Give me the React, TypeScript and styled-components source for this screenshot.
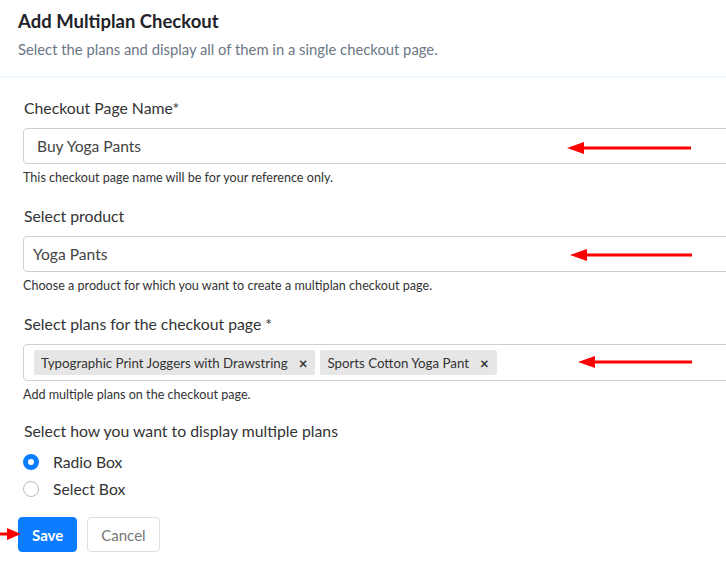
import React from "react";
import styled, { createGlobalStyle } from "styled-components";

const GlobalStyle = createGlobalStyle`
  html, body {
    margin: 0;
    padding: 0;
    background: #fff;
    overflow: hidden;
  }
  body {
    font-family: Lato, "Open Sans", sans-serif;
    color: #333;
  }
`;

const Page = styled.div`
  width: 726px;
  height: 564px;
  overflow: hidden;
  position: relative;
`;

// Header
const Header = styled.div`
  padding: 10px 18px 17px;
  border-bottom: 2px solid #eef6ff;
`;

const Title = styled.h1`
  margin: 0;
  font-size: 18.5px;
  line-height: 22px;
  font-weight: 700;
  color: #1f2329;
`;

const Subtitle = styled.p`
  margin: 7px 0 0;
  font-size: 14.8px;
  line-height: 20px;
  color: #6b7785;
`;

// Form
const Form = styled.div`
  padding: 20px 0 0 23px;
`;

const Field = styled.div<{ $top?: number }>`
  margin-top: ${($) => $.$top ?? 0}px;
  margin-bottom: 20px;

  &:last-child {
    margin-bottom: 0;
  }
`;

const Label = styled.div`
  font-size: 15.8px;
  line-height: 20px;
  color: #333;
  padding-left: 1px;
  margin-bottom: 10px;
`;

const InputWrap = styled.div`
  position: relative;
`;

const Input = styled.div<{ $pad: number }>`
  box-sizing: border-box;
  width: 760px;
  height: 36px;
  border: 1px solid #ccd0d5;
  border-radius: 4px;
  display: flex;
  align-items: center;
  padding: 0 ${($) => $.$pad}px;
  font-size: 15.6px;
  color: #444;
`;

const TagBox = styled(Input)`
  height: 37px;
  gap: 5px;
  padding: 0 10px;
`;

const Tag = styled.span`
  display: inline-flex;
  align-items: center;
  height: 25px;
  padding: 0 8px 0 7px;
  background: #e6e6e6;
  border-radius: 2px;
  font-size: 13.3px;
  color: #333;
  gap: 11px;
`;

const TagX = styled.span`
  font-weight: 700;
  font-size: 15px;
  color: #333;
`;

const Help = styled.div`
  margin-top: 6px;
  font-size: 12.6px;
  line-height: 16px;
  color: #333;
`;

const Options = styled.div`
  display: flex;
  flex-direction: column;
  margin-top: -3px;
`;

const Option = styled.label`
  display: flex;
  align-items: center;
  height: 27px;
  gap: 14px;
  font-size: 15.7px;
  color: #333;
`;

const Radio = styled.span<{ $checked: boolean }>`
  box-sizing: border-box;
  width: 16px;
  height: 16px;
  border-radius: 50%;
  border: ${($) => ($.$checked ? "5px solid #0a7cff" : "1px solid #b8bcc2")};
  background: #fff;
`;

// Footer
const Footer = styled.div`
  display: flex;
  gap: 10px;
  padding: 15px 0 0 18px;
  position: relative;
`;

const Button = styled.button<{ $primary?: boolean }>`
  height: 35px;
  padding: 0 13px;
  border-radius: 4px;
  font-family: Lato, "Open Sans", sans-serif;
  font-size: 15px;
  font-weight: ${($) => ($.$primary ? 700 : 400)};
  border: 1px solid ${($) => ($.$primary ? "#0a7cff" : "#dcdfe3")};
  background: ${($) => ($.$primary ? "#0a7cff" : "#fff")};
  color: ${($) => ($.$primary ? "#fff" : "#777")};
`;

// Red annotation arrows (overlay)
const ArrowSvg = styled.svg<{ $left: number; $top: number }>`
  position: absolute;
  left: ${($) => $.$left}px;
  top: ${($) => $.$top}px;
  overflow: visible;
`;

function LeftArrow({ left, top, length }: { left: number; top: number; length: number }) {
  return (
    <ArrowSvg $left={left} $top={top} width={length} height={14}>
      <line x1={14} y1={7} x2={length} y2={7} stroke="#f00" strokeWidth={3} />
      <polygon points={`0,7 17,1 17,13`} fill="#f00" />
    </ArrowSvg>
  );
}

function RightArrow({ left, top, length }: { left: number; top: number; length: number }) {
  return (
    <ArrowSvg $left={left} $top={top} width={length} height={14}>
      <line x1={0} y1={7} x2={length - 10} y2={7} stroke="#f00" strokeWidth={3} />
      <polygon points={`${length},7 ${length - 14},1 ${length - 14},13`} fill="#f00" />
    </ArrowSvg>
  );
}

export default function App() {
  return (
    <Page>
      <GlobalStyle />
      <Header>
        <Title>Add Multiplan Checkout</Title>
        <Subtitle>Select the plans and display all of them in a single checkout page.</Subtitle>
      </Header>
      <Form>
        <Field>
          <Label>Checkout Page Name*</Label>
          <InputWrap>
            <Input $pad={13}>Buy Yoga Pants</Input>
            <LeftArrow left={544} top={13} length={124} />
          </InputWrap>
          <Help>This checkout page name will be for your reference only.</Help>
        </Field>
        <Field>
          <Label>Select product</Label>
          <InputWrap>
            <Input $pad={9}>Yoga Pants</Input>
            <LeftArrow left={547} top={12} length={122} />
          </InputWrap>
          <Help>Choose a product for which you want to create a multiplan checkout page.</Help>
        </Field>
        <Field>
          <Label>Select plans for the checkout page *</Label>
          <InputWrap>
            <TagBox $pad={10}>
              <Tag>
                Typographic Print Joggers with Drawstring <TagX>×</TagX>
              </Tag>
              <Tag>
                Sports Cotton Yoga Pant <TagX>×</TagX>
              </Tag>
            </TagBox>
            <LeftArrow left={555} top={11} length={114} />
          </InputWrap>
          <Help>Add multiple plans on the checkout page.</Help>
        </Field>
        <Field $top={-2}>
          <Label>Select how you want to display multiple plans</Label>
          <Options>
            <Option>
              <Radio $checked={true} />
              Radio Box
            </Option>
            <Option>
              <Radio $checked={false} />
              Select Box
            </Option>
          </Options>
        </Field>
      </Form>
      <Footer>
        <Button $primary>Save</Button>
        <Button>Cancel</Button>
        <RightArrow left={0} top={25} length={21} />
      </Footer>
    </Page>
  );
}
